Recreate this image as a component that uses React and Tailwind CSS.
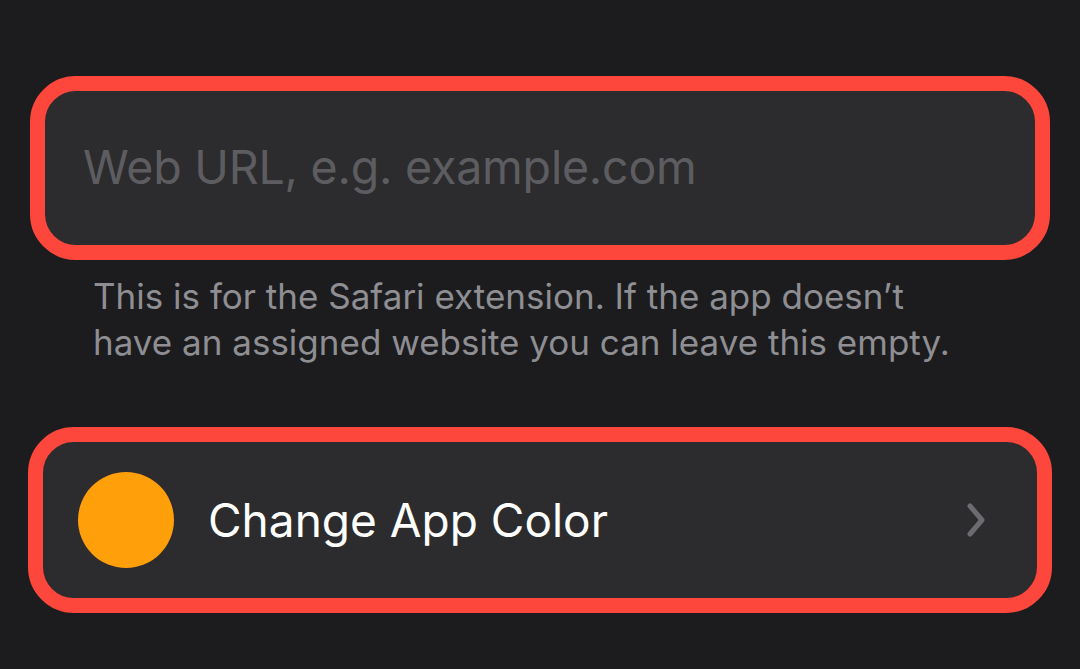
import React from 'react';

function Chevron() {
    return (
        <svg width="22" height="36" viewBox="0 0 22 36" fill="none">
            <path d="M5 4 L17 18 L5 32" stroke="#6b6b70" strokeWidth="5" strokeLinecap="round" strokeLinejoin="round" />
        </svg>
    );
}

export default function App() {
    return (
        <div className="w-[1080px] h-[669px] bg-[#1c1c1e] overflow-hidden pt-[76px]" style={{ fontFamily: 'Inter, "Noto Sans", sans-serif' }}>
            <div className="mx-[30px] h-[184px] rounded-[46px] border-[15px] border-[#fe473c] bg-[#2c2c2e] flex items-center px-[38px]">
                <span className="text-[46.5px] text-[#5d5d61] tracking-[-0.2px]">Web URL, e.g. example.com</span>
            </div>
            <div className="pl-[93px] pr-[20px] mt-[13px] text-[35px] leading-[46px] text-[#8e8e93] whitespace-nowrap">
                This is for the Safari extension. If the app doesn’t<br />
                have an assigned website you can leave this empty.
            </div>
            <div className="mx-[28px] mt-[62px] h-[186px] rounded-[46px] border-[15px] border-[#fe473c] bg-[#2c2c2e] flex items-center pl-[35px] pr-[50px]">
                <div className="w-[96px] h-[96px] rounded-full bg-[#ff9f0a]" />
                <span className="ml-[34px] text-[46px] text-white flex-1">Change App Color</span>
                <Chevron />
            </div>
        </div>
    );
}
